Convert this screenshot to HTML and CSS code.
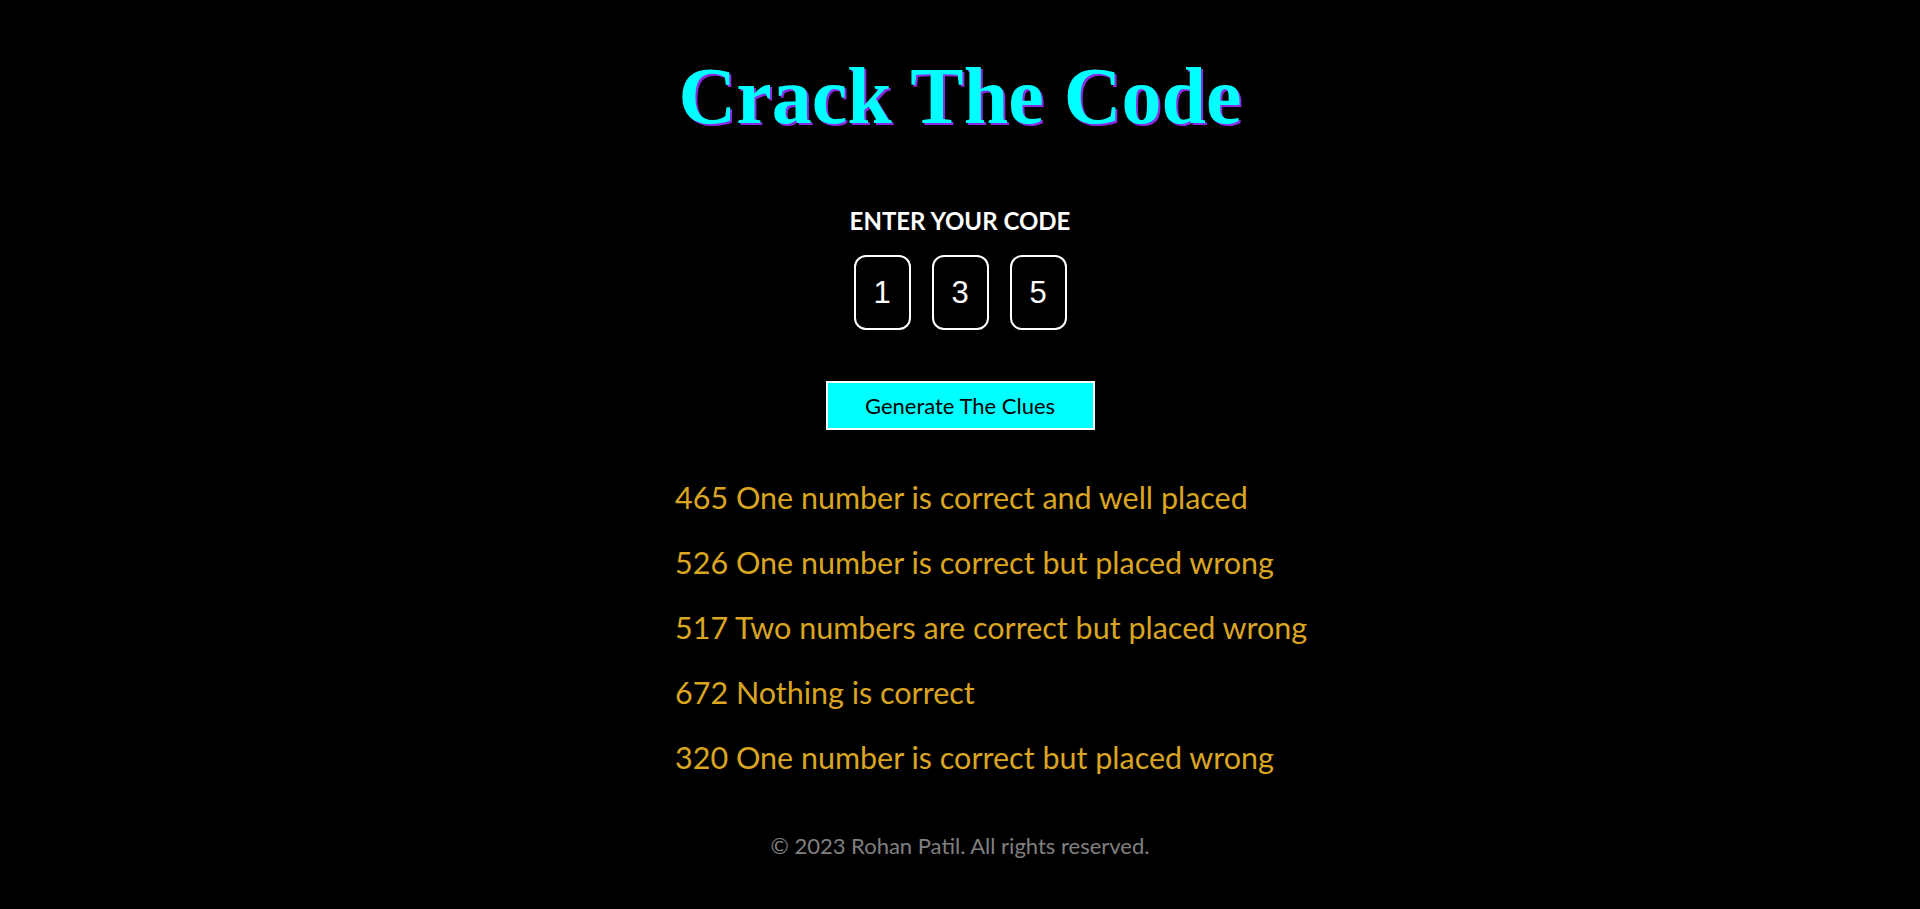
FILE: index.html
```html
<!DOCTYPE html>
<html lang="en">
<head>
<meta charset="utf-8">
<title>Crack The Code</title>
<link rel="stylesheet" href="styles.css">
</head>
<body>
<main class="page">
  <h1 class="title">Crack The Code</h1>
  <h2 class="label">ENTER YOUR CODE</h2>
  <div class="code-row">
    <input class="digit" type="text" value="1" maxlength="1">
    <input class="digit" type="text" value="3" maxlength="1">
    <input class="digit" type="text" value="5" maxlength="1">
  </div>
  <button class="generate" type="button">Generate The Clues</button>
  <div class="clues">
    <p class="clue">465 One number is correct and well placed</p>
    <p class="clue">526 One number is correct but placed wrong</p>
    <p class="clue">517 Two numbers are correct but placed wrong</p>
    <p class="clue">672 Nothing is correct</p>
    <p class="clue">320 One number is correct but placed wrong</p>
  </div>
  <footer class="footer">© 2023 Rohan Patil. All rights reserved.</footer>
</main>
</body>
</html>
```

FILE: styles.css
```css
html, body {
  margin: 0;
  padding: 0;
  background: #000;
}

.page {
  display: flex;
  flex-direction: column;
  align-items: center;
  font-family: "Lato", "Open Sans", sans-serif;
}

.title {
  margin: 56px 0 0;
  font-family: "Liberation Serif", "Times New Roman", serif;
  font-weight: bold;
  font-size: 80px;
  line-height: 80px;
  color: #00ffff;
  text-shadow: 2px 2px 0 #8a2be2;
}

.label {
  margin: 73px 0 0;
  font-size: 24px;
  line-height: 24px;
  font-weight: bold;
  color: #fff;
}

.code-row {
  display: flex;
  gap: 21px;
  margin-top: 22px;
}

.digit {
  box-sizing: border-box;
  width: 57px;
  height: 75px;
  border: 2px solid #fff;
  border-radius: 12px;
  background: #000;
  color: #fff;
  text-align: center;
  font-family: "Liberation Sans", Arial, sans-serif;
  font-size: 31px;
  padding: 0;
  outline: none;
}

.generate {
  box-sizing: border-box;
  margin-top: 51px;
  width: 269px;
  height: 49px;
  background: #00ffff;
  border: 2px solid #fff;
  color: #000;
  font-family: "Lato", "Open Sans", sans-serif;
  font-size: 22px;
  padding: 0;
}

.clues {
  box-sizing: border-box;
  width: 740px;
  padding-left: 85px;
  margin-top: 50px;
  display: flex;
  flex-direction: column;
  gap: 30px;
}

.clue {
  margin: 0;
  font-size: 30.5px;
  line-height: 35px;
  color: #daa520;
  white-space: nowrap;
}

.footer {
  margin-top: 58px;
  font-size: 22px;
  line-height: 26px;
  color: #808080;
}
```
